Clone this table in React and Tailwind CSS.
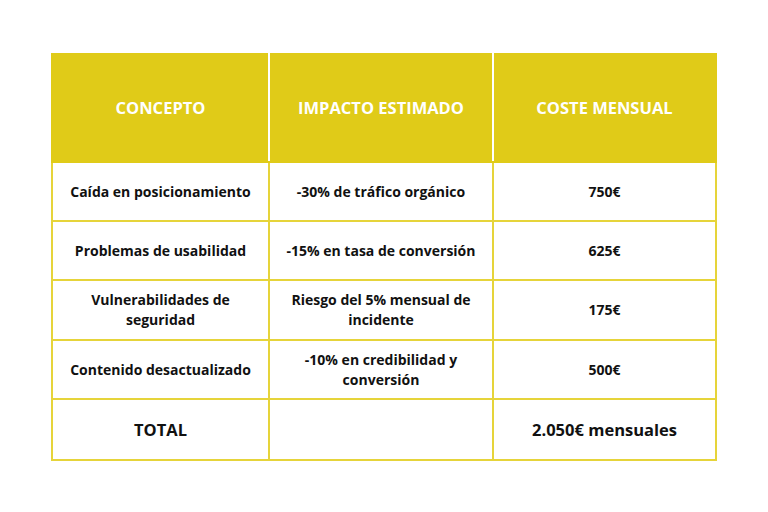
import React from "react";

const rows = [
  { concept: "Caída en posicionamiento", impact: "-30% de tráfico orgánico", cost: "750€", h: "h-[59px]" },
  { concept: "Problemas de usabilidad", impact: "-15% en tasa de conversión", cost: "625€", h: "h-[59px]" },
  { concept: "Vulnerabilidades de seguridad", impact: "Riesgo del 5% mensual de incidente", cost: "175€", h: "h-[60px]" },
  { concept: "Contenido desactualizado", impact: "-10% en credibilidad y conversión", cost: "500€", h: "h-[59px]" },
];

const App = () => {
  return (
    <div
      className="w-[768px] h-[512px] bg-white pt-[53px] pl-[51px]"
      style={{ fontFamily: '"Open Sans", "Liberation Sans", sans-serif' }}
    >
      <table className="border-collapse w-[664px] table-fixed text-center">
        <colgroup>
          <col className="w-[217px]" />
          <col className="w-[224px]" />
          <col className="w-[223px]" />
        </colgroup>
        <thead>
          <tr className="h-[108px] bg-[#e0cb18]">
            <th className="border-2 border-[#e0cb18] border-r-white text-white text-[16.5px] font-bold">CONCEPTO</th>
            <th className="border-2 border-[#e0cb18] border-r-white text-white text-[16.5px] font-bold">IMPACTO ESTIMADO</th>
            <th className="border-2 border-[#e0cb18] text-white text-[16.5px] font-bold">COSTE MENSUAL</th>
          </tr>
        </thead>
        <tbody className="text-[14px] font-bold text-[#111] leading-[20px]">
          {rows.map((r) => (
            <tr key={r.concept} className={r.h}>
              <td className="border-2 border-[#e6d43a] px-[14px]">{r.concept}</td>
              <td className="border-2 border-[#e6d43a] px-[14px]">{r.impact}</td>
              <td className="border-2 border-[#e6d43a] px-[14px]">{r.cost}</td>
            </tr>
          ))}
          <tr className="h-[61px] text-[16.5px]">
            <td className="border-2 border-[#e6d43a]">TOTAL</td>
            <td className="border-2 border-[#e6d43a]"></td>
            <td className="border-2 border-[#e6d43a]">2.050€ mensuales</td>
          </tr>
        </tbody>
      </table>
    </div>
  );
};

export default App;
